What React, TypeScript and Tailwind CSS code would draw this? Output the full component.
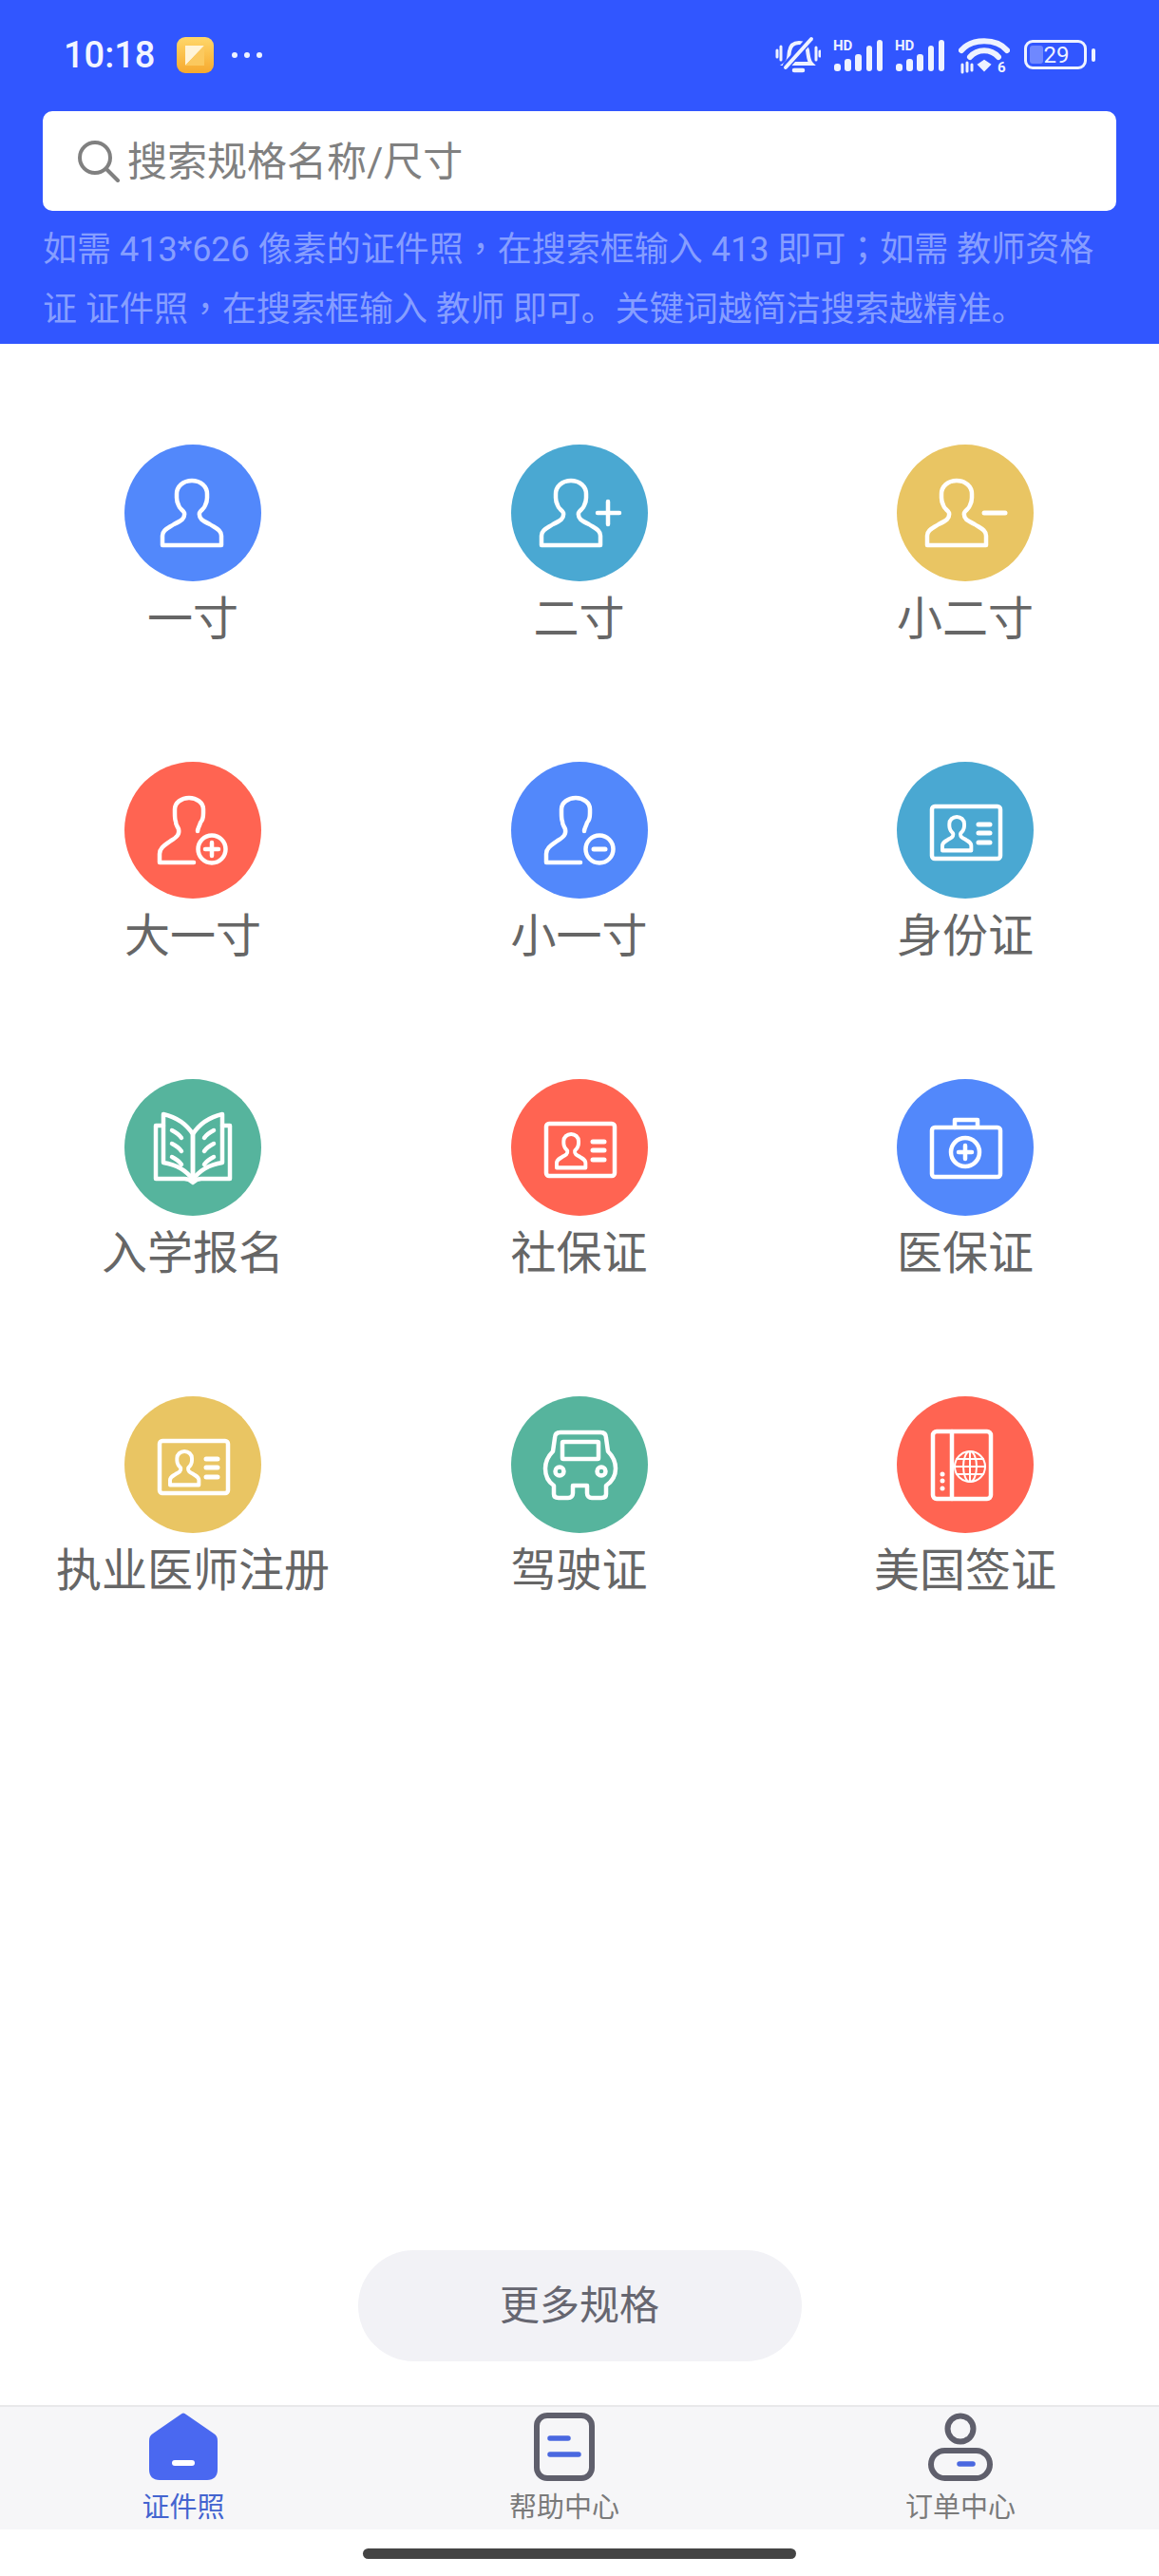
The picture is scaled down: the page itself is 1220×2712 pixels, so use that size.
import type { ReactNode } from 'react'

const BUST =
  'M2 70 V60 C2 54 8 52 14 48 C22 44 26 42 25 36 C24 33 20 32 19 28 C18 26 17 24 17 20 V16 C17 8 24 2 33 2 C42 2 49 8 49 16 V20 C49 24 48 26 47 28 C46 32 42 33 41 36 C40 42 44 44 52 48 C58 52 64 54 64 60 V70 Z'
const HALF_BUST =
  'M37 106 V97 C37 90 44 87 49 83 C56 79 58 76 57 71 C56 68 54 67 54 63 C53 61 53 58 53 54 V50 C53 43 60 38 68 38 C76 38 83 43 83 50 V54 C83 58 82 62 80 64 C79 68 77 70 77 73 M37 106 H73'

function Glyph({ children }: { children: ReactNode }) {
  return (
    <svg
      viewBox="0 0 144 144"
      className="absolute inset-0 h-full w-full"
      fill="none"
      stroke="#fff"
      strokeWidth="4.5"
      strokeLinecap="round"
      strokeLinejoin="round"
    >
      {children}
    </svg>
  )
}

const IdCard = () => (
  <Glyph>
    <rect x="37" y="47" width="72" height="55" rx="3" />
    <path d={BUST} transform="translate(47 57) scale(.49 .52)" strokeWidth="8" />
    <path d="M86 66H98M86 75H98M86 85H98" strokeWidth="5" />
  </Glyph>
)

const ICONS: Record<string, ReactNode> = {
  one: (
    <Glyph>
      <path d={BUST} transform="translate(38 36)" />
    </Glyph>
  ),
  two: (
    <Glyph>
      <path d={BUST} transform="translate(30 36)" />
      <path d="M91 72H114M102 60V84" />
    </Glyph>
  ),
  smallTwo: (
    <Glyph>
      <path d={BUST} transform="translate(30 36)" />
      <path d="M92 72H114" strokeWidth="5" />
    </Glyph>
  ),
  big: (
    <Glyph>
      <path d={HALF_BUST} />
      <circle cx="92" cy="92" r="14.5" />
      <path d="M85 92H99M92 85V99" />
    </Glyph>
  ),
  small: (
    <Glyph>
      <path d={HALF_BUST} />
      <circle cx="93" cy="92" r="14.5" />
      <path d="M87 92H99" strokeWidth="5" />
    </Glyph>
  ),
  book: (
    <Glyph>
      <path d="M41 37C54 40 65 47 72 58V106C65 96 54 90 41 88Z" />
      <path d="M103 37C90 40 79 47 72 58V106C79 96 90 90 103 88Z" />
      <path d="M41 49H33V105H63C67 105 70 107 72 109C74 107 77 105 81 105H111V49H103" />
      <path d="M50 54C54 56 58 59 60 62M50 68C54 70 58 73 60 76M50 82C54 84 58 87 60 90M94 54C90 56 86 59 84 62M94 68C90 70 86 73 84 76M94 82C90 84 86 87 84 90" />
    </Glyph>
  ),
  medical: (
    <Glyph>
      <rect x="37" y="51" width="72" height="52" rx="3" />
      <path d="M61 51V43H85V51" />
      <circle cx="72" cy="77" r="15" />
      <path d="M65 77H79M72 70V84" />
    </Glyph>
  ),
  car: (
    <Glyph>
      <path d="M52 38H94C98 38 100 40 100 44L102 58C108 64 110 70 110 76C110 84 106 90 100 94V103C100 106 98 107 95 107H85C82 107 80 105 80 102V94H65V102C65 105 63 107 60 107H50C47 107 45 106 45 103V94C39 90 36 84 36 76C36 70 38 64 44 58L46 44C46 40 48 38 52 38Z" />
      <rect x="54" y="48" width="38" height="18" rx="1" />
      <circle cx="51" cy="79" r="4.5" />
      <circle cx="95" cy="79" r="4.5" />
    </Glyph>
  ),
  passport: (
    <Glyph>
      <rect x="38" y="37" width="61" height="71" rx="4" />
      <path d="M58 37V108" />
      <g strokeWidth="2">
        <circle cx="77" cy="74" r="16" />
        <ellipse cx="77" cy="74" rx="7" ry="16" />
        <path d="M77 58V90M61 74H93M63 66H91M63 82H91" />
      </g>
      <g fill="#fff" stroke="none">
        <circle cx="48" cy="82" r="2.5" />
        <circle cx="48" cy="89" r="2.5" />
        <circle cx="48" cy="97" r="2.5" />
      </g>
    </Glyph>
  ),
}

const SPECS = [
  { label: '一寸', color: 'bg-[#5288fb]', icon: ICONS.one },
  { label: '二寸', color: 'bg-[#4aa8d2]', icon: ICONS.two },
  { label: '小二寸', color: 'bg-[#e9c563]', icon: ICONS.smallTwo },
  { label: '大一寸', color: 'bg-[#ff6452]', icon: ICONS.big },
  { label: '小一寸', color: 'bg-[#5288fb]', icon: ICONS.small },
  { label: '身份证', color: 'bg-[#4aa8d2]', icon: <IdCard /> },
  { label: '入学报名', color: 'bg-[#56b49d]', icon: ICONS.book },
  { label: '社保证', color: 'bg-[#ff6452]', icon: <IdCard /> },
  { label: '医保证', color: 'bg-[#5288fb]', icon: ICONS.medical },
  { label: '执业医师注册', color: 'bg-[#e9c563]', icon: <IdCard /> },
  { label: '驾驶证', color: 'bg-[#56b49d]', icon: ICONS.car },
  { label: '美国签证', color: 'bg-[#ff6452]', icon: ICONS.passport },
]

function Signal() {
  return (
    <svg viewBox="0 0 54 42" className="h-[42px] w-[54px]" fill="#eef2ff">
      <text x="0" y="15" fontSize="15" fontWeight="700" fontFamily="Roboto, sans-serif">
        HD
      </text>
      <rect x="1" y="29" width="7" height="8" rx="3" />
      <rect x="12" y="24" width="7" height="13" rx="3" />
      <rect x="23" y="19" width="7" height="18" rx="3" />
      <rect x="35" y="10" width="6" height="27" rx="3" />
      <rect x="46" y="4" width="6" height="33" rx="3" />
    </svg>
  )
}

function StatusIcons() {
  return (
    <div className="flex items-start">
      <svg viewBox="0 0 48 40" className="h-[40px] w-[48px]" fill="none" stroke="#eef2ff" strokeWidth="4" strokeLinecap="round">
        <path d="M11 29C15 26 14 21 15 16C16 10 20 7 25 7C30 7 33 10 34 15C35 21 35 26 38 29Z" />
        <path d="M20 36H29" strokeWidth="4.5" />
        <path d="M12 31L37 3" stroke="#3156ff" strokeWidth="8" />
        <path d="M11 33L38 3" />
        <path d="M2 15V22M6 11V25M43 12V25M47 16V21" strokeWidth="3" />
      </svg>
      <div className="ml-[13px] flex gap-[11px]">
        <Signal />
        <Signal />
      </div>
      <svg viewBox="0 0 54 42" className="ml-[13px] h-[42px] w-[54px]" fill="none" stroke="#eef2ff" strokeLinecap="round">
        <path d="M3 15C14 2 40 2 51 15" strokeWidth="6" />
        <path d="M12 22C20 13 34 13 42 22" strokeWidth="6" />
        <path d="M21 30L27 26L33 30L27 36Z" fill="#eef2ff" strokeWidth="2" />
        <path d="M4 30V38M9 28V37M14 30V36" strokeWidth="3" />
        <text x="41" y="38" fontSize="15" fontWeight="700" fill="#eef2ff" stroke="none" fontFamily="Roboto, sans-serif">
          6
        </text>
      </svg>
      <div className="mt-[4px] ml-[15px] flex items-center">
        <div className="relative flex h-[31px] w-[66px] items-center justify-center rounded-[9px] border-[3px] border-[#eef2ff]">
          <div className="absolute top-[3px] bottom-[3px] left-[3px] w-[14px] rounded-[3px] bg-[#6f88ff]" />
          <span className="relative ml-[2px] font-['Roboto'] text-[24px] leading-[24px] text-[#eef2ff]">29</span>
        </div>
        <div className="ml-[5px] h-[14px] w-[4px] rounded-full bg-[#eef2ff]" />
      </div>
    </div>
  )
}

function Punct({ children }: { children: ReactNode }) {
  // the reference centres these two, which is how the TC face draws them
  return <span className="font-['Noto_Sans_CJK_TC'] leading-[0]">{children}</span>
}

function Header() {
  return (
    <header className="bg-[#3156ff] px-[45px] pb-[4px]">
      <div className="flex h-[117px] items-start justify-between pt-[38px] pr-[22px]">
        <div className="flex items-center pl-[22px]">
          <span className="font-['Roboto'] text-[38px] leading-[40px] font-medium text-[#f2f5ff]">10:18</span>
          <svg viewBox="0 0 39 38" className="ml-[23px] h-[38px] w-[39px]">
            <defs>
              <linearGradient id="appIcon" x1="0" y1="0" x2="0" y2="1">
                <stop offset="0" stopColor="#ffd76a" />
                <stop offset="1" stopColor="#f6a92e" />
              </linearGradient>
            </defs>
            <rect width="39" height="38" rx="9" fill="url(#appIcon)" />
            <path d="M9 30V9H29Z" fill="#fff4d8" />
            <path d="M9 30L29 9V30Z" fill="#fbc95e" />
          </svg>
          <div className="ml-[19px] flex gap-[7px]">
            <span className="h-[6px] w-[6px] rounded-full bg-[#eef2ff]" />
            <span className="h-[6px] w-[6px] rounded-full bg-[#eef2ff]" />
            <span className="h-[6px] w-[6px] rounded-full bg-[#eef2ff]" />
          </div>
        </div>
        <StatusIcons />
      </div>
      <div className="flex h-[105px] items-center rounded-[10px] bg-white pl-[37px]">
        <svg viewBox="0 0 44 44" className="h-[44px] w-[44px]" fill="none" stroke="#808080" strokeWidth="4" strokeLinecap="round">
          <circle cx="18" cy="18" r="16" />
          <path d="M30 30L42 42" />
        </svg>
        <span className="mt-[2px] ml-[8px] text-[42px] leading-none text-[#808080]">搜索规格名称/尺寸</span>
      </div>
      <p className="mt-[10px] text-[36px] leading-[63px] whitespace-nowrap text-[#869eff]">
        如需 413*626 像素的证件照<Punct>，</Punct>在搜索框输入 413 即可<Punct>；</Punct>如需 教师资格
        <br />
        证 证件照<Punct>，</Punct>在搜索框输入 教师 即可。关键词越简洁搜索越精准。
      </p>
    </header>
  )
}

function TabLabel({ active, children }: { active?: boolean; children: ReactNode }) {
  return (
    <span className={`mt-[11px] text-[29px] leading-[34px] ${active ? 'text-[#4464d0]' : 'text-[#7a7a7a]'}`}>{children}</span>
  )
}

function TabBar() {
  return (
    <nav className="grid h-[131px] grid-cols-[386px_416px_418px] border-t-2 border-[#e8e8ea] bg-[#f6f6f8] pt-[6px]">
      <div className="flex flex-col items-center">
        <svg viewBox="0 0 72 72" className="h-[72px] w-[72px]">
          <path d="M33 2C35 0 37 0 39 2L68 22C71 24 72 26 72 30V60C72 67 68 71 61 71H11C4 71 0 67 0 60V30C0 26 1 24 4 22Z" fill="#4a68f0" />
          <rect x="24" y="50" width="24" height="6" rx="3" fill="#fff" />
        </svg>
        <TabLabel active>证件照</TabLabel>
      </div>
      <div className="flex flex-col items-center">
        <svg viewBox="0 0 64 72" className="h-[72px] w-[64px]" fill="none" strokeLinecap="round">
          <rect x="3" y="3" width="58" height="66" rx="11" stroke="#5f5f6c" strokeWidth="6" />
          <path d="M17 27H36M17 44H47" stroke="#4a68e0" strokeWidth="5.5" />
        </svg>
        <TabLabel>帮助中心</TabLabel>
      </div>
      <div className="flex flex-col items-center">
        <svg viewBox="0 0 68 72" className="h-[72px] w-[68px]" fill="none" strokeLinecap="round">
          <circle cx="34" cy="17" r="13.5" stroke="#5f5f6c" strokeWidth="6" />
          <rect x="3" y="40" width="62" height="29" rx="14.5" stroke="#5f5f6c" strokeWidth="6" />
          <path d="M33 54H47" stroke="#4a68e0" strokeWidth="5.5" />
        </svg>
        <TabLabel>订单中心</TabLabel>
      </div>
    </nav>
  )
}

export default function App() {
  return (
    <div className="flex h-[2712px] w-[1220px] flex-col overflow-hidden bg-white font-['Roboto','Noto_Sans_CJK_SC',sans-serif]">
      <Header />
      <main className="flex flex-1 flex-col">
        <div className="grid auto-rows-[334px] grid-cols-[406px_407px_406px] pt-[106px]">
          {SPECS.map((s) => (
            <div key={s.label} className="flex flex-col items-center">
              <div className={`relative h-[144px] w-[144px] rounded-full ${s.color}`}>{s.icon}</div>
              <span className="mt-[16px] text-[48px] leading-[48px] text-[#666666]">{s.label}</span>
            </div>
          ))}
        </div>
        <button
          type="button"
          className="mx-auto mt-auto mb-[46px] h-[117px] w-[467px] rounded-full bg-[#f2f2f6] text-[42px] text-[#666670]"
        >
          更多规格
        </button>
      </main>
      <TabBar />
      <div className="flex h-[49px] justify-center pt-[20px]">
        <div className="h-[11px] w-[456px] rounded-full bg-[#444444]" />
      </div>
    </div>
  )
}
